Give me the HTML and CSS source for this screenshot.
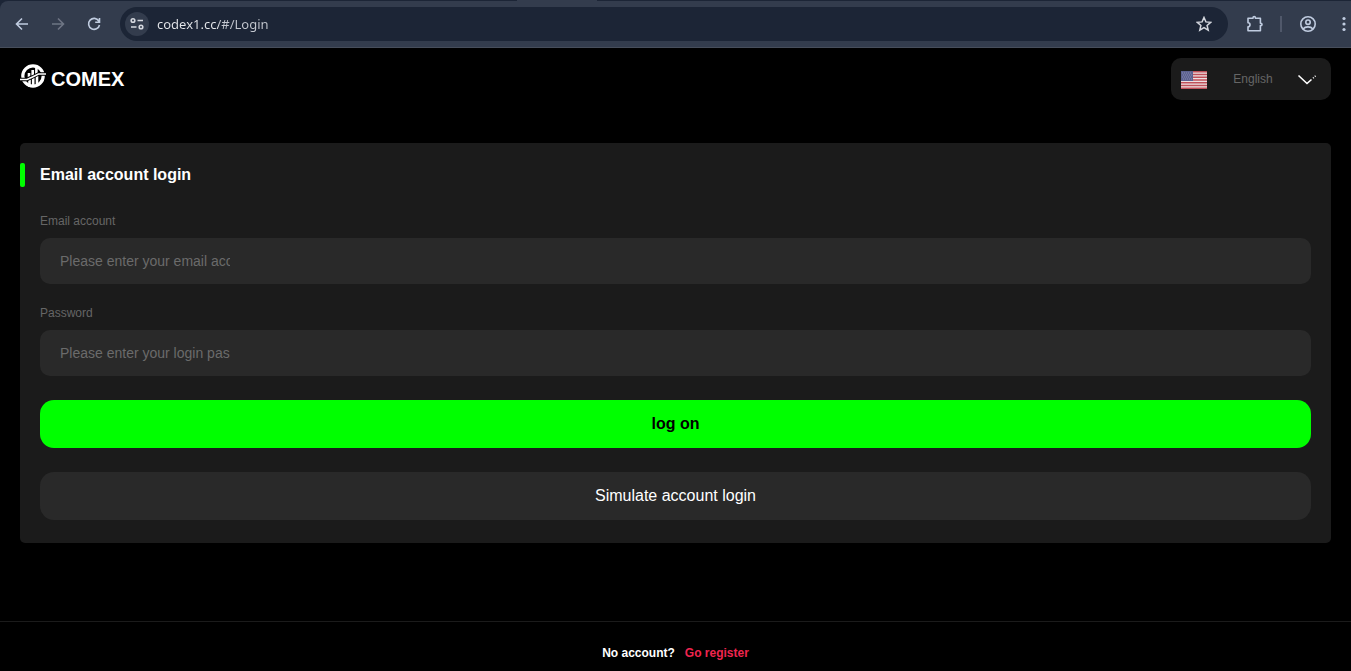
FILE: index.html
```html
<!DOCTYPE html>
<html lang="en">
<head>
    <meta charset="UTF-8">
    <meta name="viewport" content="width=device-width, initial-scale=1.0">
    <title>COMEX</title>
    <link rel="stylesheet" href="styles.css">
</head>
<body>
    <div class="browser">
        <div class="tab-edge"><span></span></div>
        <div class="toolbar">
            <button class="nav-btn" type="button" aria-label="Back">
                <svg viewBox="0 0 16 16" width="16" height="16"><path d="M14 8H3M8 2.500 2.500 8 8 13.500"/></svg>
            </button>
            <button class="nav-btn disabled" type="button" aria-label="Forward" disabled>
                <svg viewBox="0 0 16 16" width="16" height="16"><path d="M2 8h11M8 2.500 13.500 8 8 13.500"/></svg>
            </button>
            <button class="nav-btn" type="button" aria-label="Reload">
                <svg viewBox="0 0 16 16" width="16" height="16"><path d="M12.800 5A5.500 5.500 0 1 0 13.500 9M13.500 2v4.200H9.200"/></svg>
            </button>
            <div class="address">
                <button class="site-info" type="button" aria-label="Site information">
                    <svg viewBox="0 0 16 16" width="16" height="16"><circle cx="4" cy="4.500" r="1.800"/><path d="M8.500 4.500H14M2 11h5.500"/><circle cx="12" cy="11" r="1.800"/></svg>
                </button>
                <input class="url" type="text" value="codex1.cc/#/Login" aria-label="Address">
                <button class="star" type="button" aria-label="Bookmark">
                    <svg viewBox="0 0 16 16" width="16" height="16"><path d="m8 1.500 1.900 4.400 4.800.4-3.600 3.200 1.100 4.700L8 11.700l-4.200 2.500 1.100-4.700-3.600-3.200 4.800-.4z"/></svg>
                </button>
            </div>
            <button class="ext" type="button" aria-label="Extensions">
                <svg viewBox="0 0 18 18" width="18" height="18"><path d="M2 3.200h5v-.5a1.200 1.200 0 0 1 2.400 0v.5h5v5h.4a1.200 1.200 0 0 1 0 2.400h-.4v5.200H2v-4a2 2 0 0 0 0-4z" stroke-linejoin="round"/></svg>
            </button>
            <span class="divider"></span>
            <button class="profile" type="button" aria-label="Profile">
                <svg viewBox="0 0 18 18" width="18" height="18"><circle cx="9" cy="9" r="7.200"/><circle cx="9" cy="7.200" r="2.200"/><path d="M4 14c2.500-2.800 7.500-2.800 10 0"/></svg>
            </button>
            <button class="more" type="button" aria-label="Menu">
                <svg viewBox="0 0 4 16" width="4" height="16"><circle cx="2" cy="2.500" r="1.600"/><circle cx="2" cy="8" r="1.600"/><circle cx="2" cy="13.500" r="1.600"/></svg>
            </button>
        </div>
    </div>

    <header class="header">
        <div class="brand">
            <svg class="logo" viewBox="0 0 26 26" width="26" height="26">
                <circle cx="13" cy="13" r="10.200" fill="none" stroke="#fff" stroke-width="3.200"/>
                <path d="M9 10v6M12.700 7v8M16.400 4v8M9.500 16v8M13.200 14v9M17 13v8" stroke="#fff" stroke-width="2.600"/>
                <path d="M0 16.500h7l5.500-2.500 6-3H26" fill="none" stroke="#000" stroke-width="3.600"/>
                <path d="M0 16.500h7l5.500-2.500 6-3H26" fill="none" stroke="#fff" stroke-width="1.500"/>
            </svg>
            <h1>COMEX</h1>
        </div>
        <div class="language">
            <svg class="flag" viewBox="0 0 26 18" width="26" height="18">
                <rect width="26" height="18" fill="#ece0e2"/>
                <path d="M0 .7h26M0 3.500h26M0 6.200h26M0 9h26M0 11.800h26M0 14.500h26M0 17.300h26" stroke="#c0505a" stroke-width="1.400"/>
                <rect width="12" height="10" fill="#5c6190"/>
                <path d="M1 2h10M2 4h10M1 6h10M2 8h10" stroke="#9295b5" stroke-width=".8" stroke-dasharray="1 1"/>
            </svg>
            <select aria-label="Language">
                <option>English</option>
            </select>
            <svg class="arrow" viewBox="0 0 20 12" width="20" height="12"><path d="m1.500 1.500 8.500 8 4.500-4M16 4.200l.8-.7M17.800 2.500l.8-.7"/></svg>
        </div>
    </header>

    <main class="container">
        <h2>Email account login</h2>
        <form id="loginForm">
            <label for="email">Email account</label>
            <div class="field">
                <input type="email" id="email" placeholder="Please enter your email account">
            </div>
            <label for="password">Password</label>
            <div class="field">
                <input type="password" id="password" placeholder="Please enter your login password">
            </div>
            <button class="btn login" type="submit">log on</button>
            <button class="btn simulate" type="button">Simulate account login</button>
        </form>
    </main>

    <footer class="footer">
        <span>No account?</span>
        <a href="#/Register">Go register</a>
    </footer>
</body>
</html>
```
FILE: styles.css
```css
* {
    box-sizing: border-box;
}
body {
    display: flex;
    flex-direction: column;
    min-height: 100vh;
    margin: 0;
    background-color: #000;
    color: white;
    font-family: Arial, "Liberation Sans", sans-serif;
}
button, input, select {
    margin: 0;
    padding: 0;
    border: none;
    outline: none;
    background: none;
    font-family: inherit;
}
button {
    cursor: pointer;
}
svg {
    display: block;
}

/* browser bar */
.browser {
    background-color: #1c2536;
}
.tab-edge {
    height: 1px;
}
.tab-edge span {
    display: block;
    width: 80px;
    height: 1px;
    margin-left: 517px;
    background-color: #333c4d;
}
.toolbar {
    display: flex;
    align-items: center;
    height: 47px;
    padding: 0 4px 0 14px;
    border-bottom: 1px solid #474e5b;
    border-radius: 8px 0 0 0;
    background-color: #333c4d;
}
.toolbar svg {
    fill: none;
    stroke: #c0cce0;
    stroke-width: 1.6;
}
.nav-btn {
    margin-right: 20px;
}
.nav-btn.disabled svg {
    stroke: #6e7584;
}
.address {
    display: flex;
    flex: 1;
    align-items: center;
    height: 34px;
    margin-right: 18px;
    margin-left: -2px;
    padding: 0 16px 0 5px;
    border-radius: 17px;
    background-color: #1c2536;
}
.site-info {
    display: flex;
    align-items: center;
    justify-content: center;
    width: 24px;
    height: 24px;
    margin-right: 8px;
    border-radius: 50%;
    background-color: #333c4d;
}
.address svg {
    stroke: #d5d8df;
}
.address .star svg {
    stroke-width: 1.5;
}
.url {
    flex: 1;
    height: 24px;
    background: linear-gradient(to right, #e6e8ec 62px, #c4c8d0 62px);
    background-clip: text;
    -webkit-background-clip: text;
    color: transparent;
    font-family: "Segoe UI", "Noto Sans", sans-serif;
    font-size: 13px;
}
.divider {
    width: 2px;
    height: 16px;
    margin: 0 17px 0 16px;
    background-color: #50586a;
}
.more {
    margin-left: 25px;
    margin-right: 1px;
}
.toolbar .more svg {
    fill: #c0cce0;
    stroke: none;
}

/* page header */
.header {
    display: flex;
    align-items: center;
    justify-content: space-between;
    padding: 10px 20px;
}
.brand {
    display: flex;
    align-items: center;
    gap: 5px;
}
.logo {
    margin-bottom: 6px;
}
h1 {
    margin: 0;
    font-size: 20px;
    line-height: 26px;
}
.language {
    display: flex;
    align-items: center;
    width: 160px;
    height: 42px;
    padding: 0 14px 0 10px;
    border-radius: 10px;
    background-color: #1b1b1b;
}
.flag {
    margin-top: 2px;
}
.language select {
    flex: 1;
    padding-left: 2px;
    appearance: none;
    color: #666;
    font-size: 12px;
    text-align: center;
}
.arrow {
    margin-top: 2px;
    fill: none;
    stroke: white;
    stroke-width: 1.6;
}

/* login card */
.container {
    margin: 33px 20px 0;
    padding: 20px 20px 23px;
    border-radius: 5px;
    background-color: #1b1b1b;
}
h2 {
    display: flex;
    gap: 15px;
    margin: 0 0 26px -20px;
    font-size: 16px;
    line-height: 24px;
}
h2::before {
    content: "";
    width: 5px;
    border-radius: 2px;
    background-color: #0f0;
}
label {
    display: block;
    margin-bottom: 9px;
    color: #666;
    font-size: 12px;
    line-height: 16px;
}
.field {
    display: flex;
    height: 46px;
    margin-bottom: 21px;
    padding: 0 20px;
    border-radius: 10px;
    background-color: #292929;
}
.field input {
    width: 170px;
    color: white;
    font-size: 14px;
}
.field input::placeholder {
    color: #6b6b6b;
}
.btn {
    display: block;
    width: 100%;
    height: 48px;
    margin-top: 24px;
    border-radius: 14px;
    font-size: 16px;
}
.login {
    background-color: #0f0;
    color: #000;
    font-weight: bold;
}
.simulate {
    background-color: #292929;
    color: white;
}

/* bottom bar */
.footer {
    display: flex;
    justify-content: center;
    gap: 10px;
    margin-top: auto;
    padding: 22px 0 9px;
    border-top: 1px solid #1b1b1b;
    font-size: 12px;
    font-weight: bold;
    line-height: 18px;
}
.footer a {
    color: #f0254f;
    text-decoration: none;
}
```
